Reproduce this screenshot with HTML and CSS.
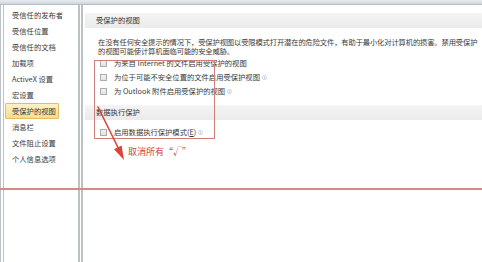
FILE: index.html
```html
<!DOCTYPE html>
<html lang="zh-CN">
<head>
<meta charset="utf-8">
<title>信任中心 - 受保护的视图</title>
<link rel="stylesheet" href="styles.css">
</head>
<body>
<div class="window">
  <div class="topbar"></div>
  <div class="layout">
    <nav class="sidebar">
      <div class="nav-item">受信任的发布者</div>
      <div class="nav-item">受信任位置</div>
      <div class="nav-item">受信任的文档</div>
      <div class="nav-item">加载项</div>
      <div class="nav-item">ActiveX 设置</div>
      <div class="nav-item">宏设置</div>
      <div class="nav-item"><span class="nav-label selected">受保护的视图</span></div>
      <div class="nav-item">消息栏</div>
      <div class="nav-item">文件阻止设置</div>
      <div class="nav-item">个人信息选项</div>
    </nav>
    <main class="content">
      <section class="group">
        <div class="group-title">受保护的视图</div>
        <p class="desc">在没有任何安全提示的情况下，受保护视图以受限模式打开潜在的危险文件，有助于最小化对计算机的损害。禁用受保护<br>的视图可能使计算机面临可能的安全威胁。</p>
        <ul class="options">
          <li class="option"><span class="checkbox"></span><span>为来自 Internet 的文件启用受保护的视图</span></li>
          <li class="option"><span class="checkbox"></span><span>为位于可能不安全位置的文件启用受保护视图</span><svg class="info" viewBox="0 0 10 10"><circle cx="5" cy="5" r="4.2" fill="none" stroke="#8fa8c8" stroke-width="0.9"/><rect x="4.5" y="4.3" width="1" height="3.2" fill="#6f8db5"/><rect x="4.5" y="2.5" width="1" height="1" fill="#6f8db5"/></svg></li>
          <li class="option"><span class="checkbox"></span><span>为 Outlook 附件启用受保护的视图</span><svg class="info" viewBox="0 0 10 10"><circle cx="5" cy="5" r="4.2" fill="none" stroke="#8fa8c8" stroke-width="0.9"/><rect x="4.5" y="4.3" width="1" height="3.2" fill="#6f8db5"/><rect x="4.5" y="2.5" width="1" height="1" fill="#6f8db5"/></svg></li>
        </ul>
      </section>
      <section class="group group-dep">
        <div class="group-title">数据执行保护</div>
        <ul class="options options-dep">
          <li class="option"><span class="checkbox"></span><span>启用数据执行保护模式(<u>E</u>)</span><svg class="info" viewBox="0 0 10 10"><circle cx="5" cy="5" r="4.2" fill="none" stroke="#8fa8c8" stroke-width="0.9"/><rect x="4.5" y="4.3" width="1" height="3.2" fill="#6f8db5"/><rect x="4.5" y="2.5" width="1" height="1" fill="#6f8db5"/></svg></li>
        </ul>
      </section>
    </main>
  </div>

  <div class="annot-box"></div>
  <svg class="annot-arrow" viewBox="0 0 45 65" width="45" height="65">
    <line x1="8" y1="7" x2="28" y2="47.5" stroke="#d9453a" stroke-width="1.6" stroke-linecap="round"/>
    <polygon points="34,60 31.6,45.4 24,49.2" fill="#d9453a"/>
  </svg>
  <div class="annot-text">取消所有“√”</div>
  <div class="annot-line"></div>
</div>
</body>
</html>
```

FILE: styles.css
```css
html, body {
  margin: 0;
  padding: 0;
  background: #ffffff;
}

body {
  font-family: "Noto Sans CJK SC", "Liberation Sans", sans-serif;
  font-size: 7.3px;
  color: #3a3a3a;
}

.window {
  position: relative;
  width: 482px;
  height: 262px;
  overflow: hidden;
  background: #fff;
}

.topbar {
  height: 4px;
  background: linear-gradient(#e6ebf1, #cfd5dc);
  border-bottom: 1px solid #b8bdc4;
}

.layout {
  display: flex;
  height: 257px;
}

.sidebar {
  width: 74px;
  flex: none;
  border-left: 4px double #bcc0c7;
  border-right: 5px double #bcc0c7;
  padding-top: 2px;
}

.nav-item {
  height: 16px;
  line-height: 16px;
  white-space: nowrap;
  padding-left: 1px;
}

.nav-item:not(:has(.nav-label)) {
  padding-left: 8px;
}

.nav-label {
  display: inline-block;
  height: 14px;
  line-height: 14px;
  padding: 0 2px 0 6px;
  border: 1px solid #e3bd5e;
  background: linear-gradient(#fdf1c4, #f9dc8a);
  border-radius: 1px;
}

.content {
  flex: 1;
  min-width: 0;
  padding-left: 2px;
}

.group-title {
  margin-top: 8px;
  height: 15px;
  line-height: 15px;
  padding-left: 11px;
  background: linear-gradient(#f4f4f4, #ebebeb);
  color: #333;
}

.desc {
  margin: 10px 0 0 0;
  padding-left: 13px;
  line-height: 9px;
  letter-spacing: -0.14px;
  white-space: nowrap;
  color: #3a3a3a;
}

.options {
  list-style: none;
  margin: 0;
  padding: 0 0 0 15px;
}

.option {
  display: flex;
  align-items: center;
  height: 14px;
  white-space: nowrap;
}

.checkbox {
  width: 5px;
  height: 5px;
  margin-right: 7px;
  border: 1px solid #acacac;
  background: linear-gradient(#f2f2f2, #e2e2e2);
  flex: none;
}

.info {
  width: 5px;
  height: 5px;
  margin-left: 2px;
  flex: none;
}

.group-dep {
  margin-top: 7px;
}

.group-dep .group-title {
  margin-top: 0;
}

.options-dep {
  margin-top: 5px;
}

.annot-box {
  position: absolute;
  left: 94px;
  top: 60px;
  width: 119px;
  height: 77px;
  border: 1px solid #cf7f79;
}

.annot-arrow {
  position: absolute;
  left: 90px;
  top: 100px;
}

.annot-text {
  position: absolute;
  left: 128px;
  top: 146px;
  font-size: 9px;
  line-height: 12px;
  color: #c9473c;
  white-space: nowrap;
}

.annot-line {
  position: absolute;
  left: 0;
  right: 0;
  top: 188px;
  height: 2px;
  background: #d98780;
}
```
